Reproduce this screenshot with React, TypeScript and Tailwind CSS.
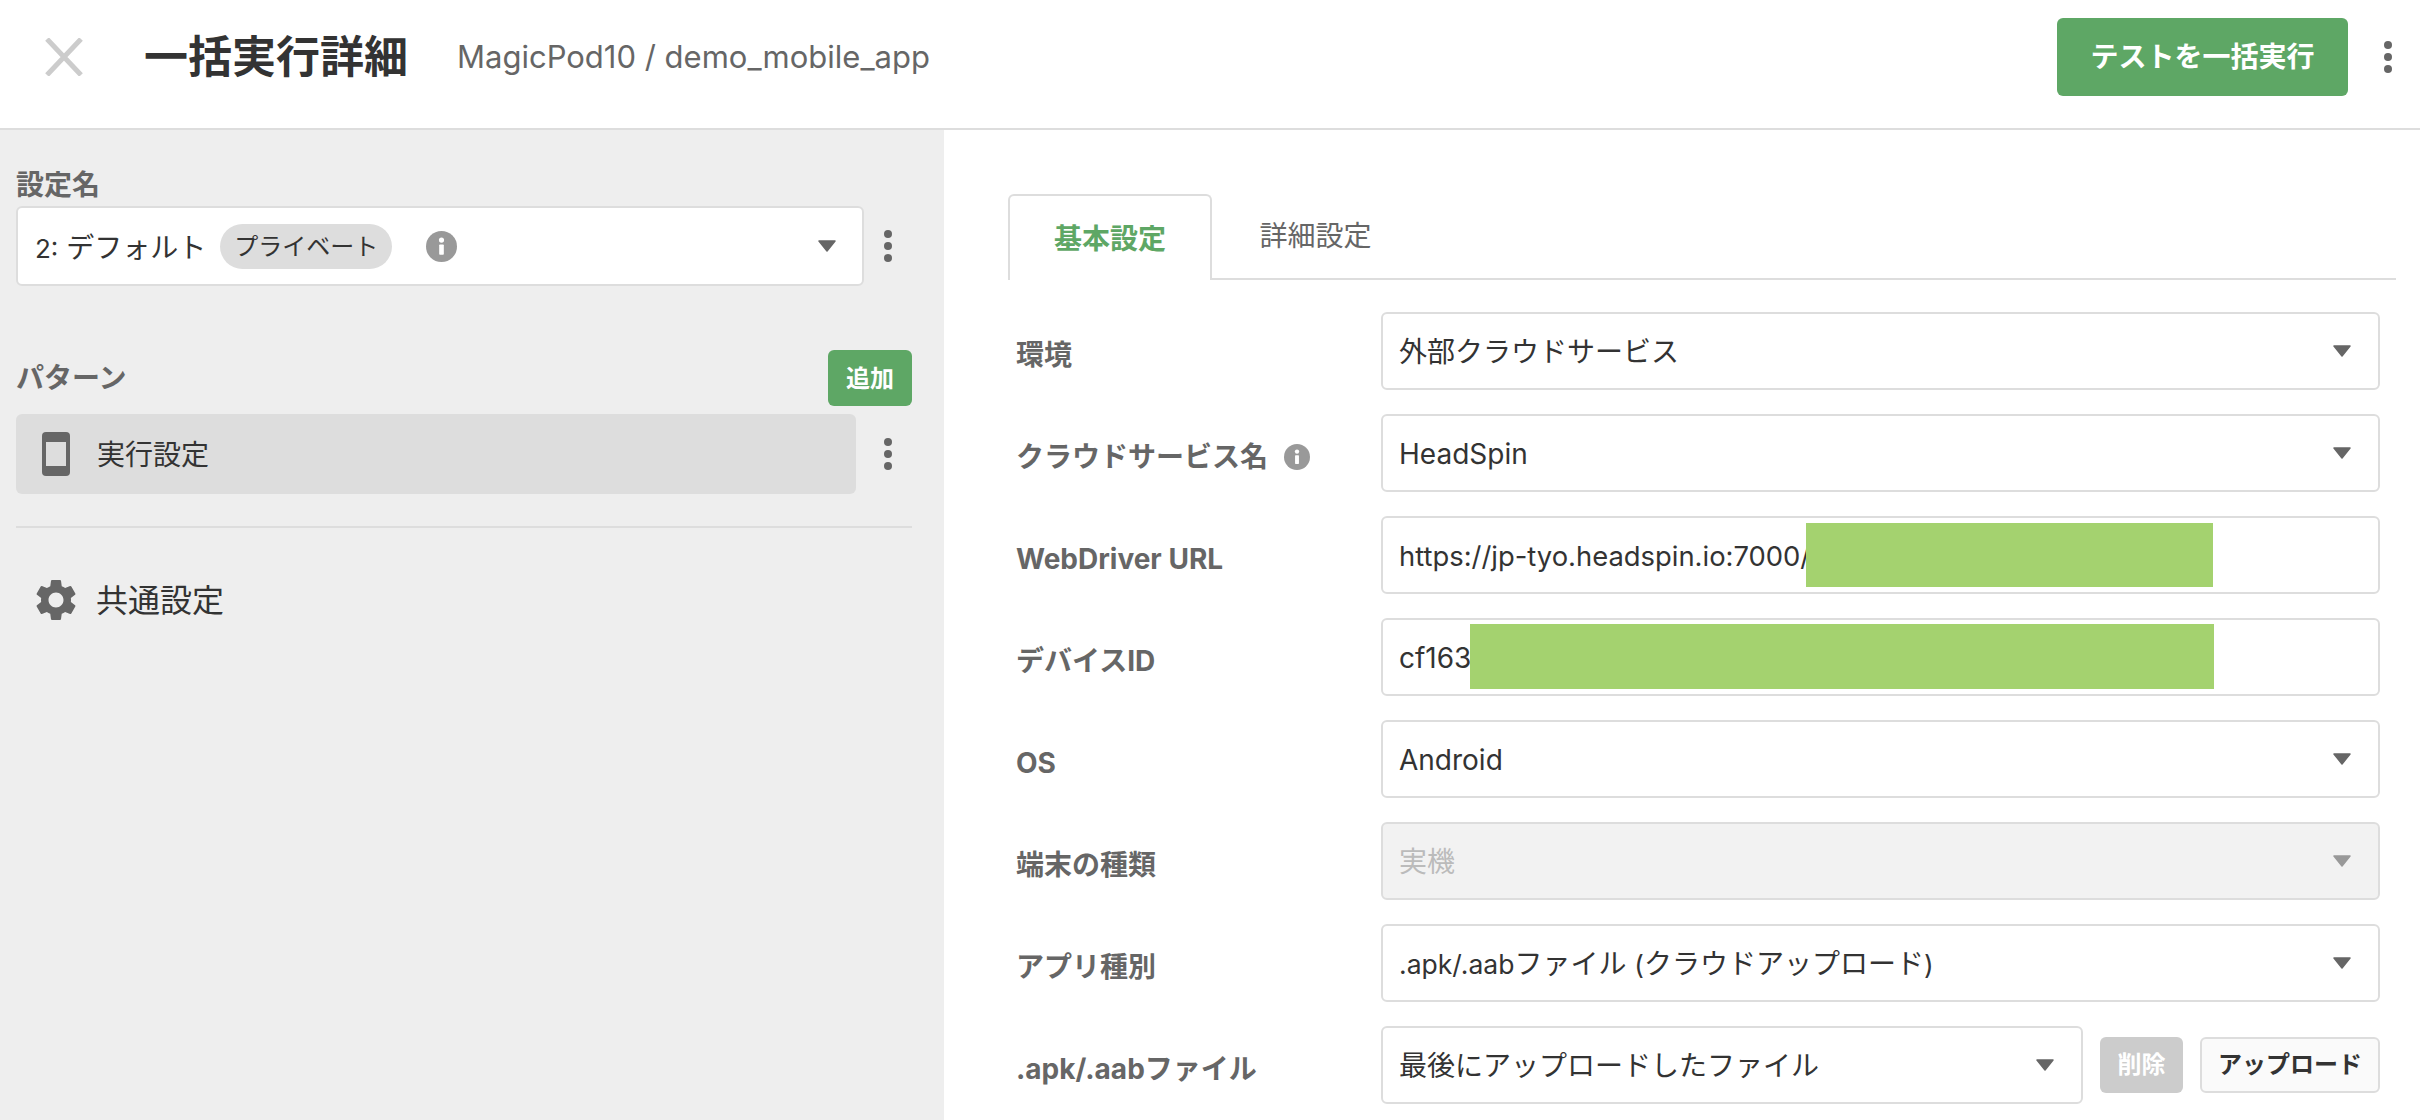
const GREEN = 'bg-[#5ea765]';

function Kebab() {
  return (
    <svg width="10" height="34" viewBox="0 0 10 34" className="shrink-0">
      <circle cx="5" cy="5" r="4" fill="#666" />
      <circle cx="5" cy="17" r="4" fill="#666" />
      <circle cx="5" cy="29" r="4" fill="#666" />
    </svg>
  );
}

function Arrow({ light = false }: { light?: boolean }) {
  return (
    <svg width="20" height="12" viewBox="0 0 20 12" className="shrink-0">
      <path d="M2 1h16l-8 10z" fill={light ? '#999' : '#666'} stroke={light ? '#999' : '#666'} strokeWidth="1.5" strokeLinejoin="round" />
    </svg>
  );
}

function Info({ size }: { size: number }) {
  return (
    <svg width={size} height={size} viewBox="0 0 24 24" className="shrink-0">
      <circle cx="12" cy="12" r="12" fill="#999" />
      <rect x="10.2" y="10.4" width="3.6" height="8" rx="0.6" fill="#fff" />
      <circle cx="12" cy="7" r="2" fill="#fff" />
    </svg>
  );
}

function Field({ children, disabled = false, arrow = true, className = '' }: { children?: React.ReactNode; disabled?: boolean; arrow?: boolean; className?: string }) {
  return (
    <div className={`relative flex h-[78px] items-center rounded-[6px] border-2 border-[#ddd] pl-[16px] pr-[26px] text-[28px] ${disabled ? 'bg-[#f2f2f2] text-[#bbb]' : 'bg-white text-[#333]'} ${className}`}>
      <span className="flex-1 whitespace-nowrap pt-[2px]">{children}</span>
      {arrow && <Arrow light={disabled} />}
    </div>
  );
}

function Row({ label, info = false, children }: { label: string; info?: boolean; children: React.ReactNode }) {
  return (
    <div className="mb-[24px] flex items-center">
      <div className="flex w-[365px] shrink-0 items-center gap-[16px] pt-[8px] text-[28px] font-bold text-[#666]">
        {label}
        {info && <Info size={26} />}
      </div>
      <div className="min-w-0 flex-1">{children}</div>
    </div>
  );
}

function Sidebar() {
  return (
    <aside className="h-full w-[944px] shrink-0 bg-[#eee] pl-[16px] pr-[32px] pt-[35px]">
      <div className="h-[41px] text-[28px] font-bold leading-[40px] text-[#666]">設定名</div>
      <div className="flex items-center">
        <div className="flex h-[80px] w-[848px] shrink-0 items-center rounded-[6px] border-2 border-[#ddd] bg-white pl-[17px] pr-[25px] text-[28px] text-[#333]">
          <span className="pt-[3px]">
            <span className="text-[26px]">2:</span> デフォルト
          </span>
          <span className="ml-[14px] flex h-[45px] w-[172px] items-center justify-center rounded-full bg-[#ddd] pt-[2px] text-[24px]">プライベート</span>
          <span className="ml-[34px] flex-1">
            <Info size={31} />
          </span>
          <Arrow />
        </div>
        <div className="flex w-[48px] justify-center">
          <Kebab />
        </div>
      </div>

      <div className="mt-[64px] flex h-[56px] items-center justify-between">
        <span className="text-[28px] font-bold text-[#666]">パターン</span>
        <button className={`h-[56px] w-[84px] rounded-[6px] ${GREEN} pt-[1px] text-[24px] font-bold text-white`}>追加</button>
      </div>
      <div className="mt-[8px] flex items-center">
        <div className="flex h-[80px] w-[840px] shrink-0 items-center rounded-[6px] bg-[#ddd] pl-[26px] text-[28px] text-[#333]">
          <svg width="28" height="44" viewBox="0 0 28 44" className="shrink-0">
            <rect width="28" height="44" rx="4" fill="#666" />
            <rect x="4" y="10" width="20" height="24" fill="#ddd" />
          </svg>
          <span className="ml-[27px] pt-[2px]">実行設定</span>
        </div>
        <div className="flex w-[56px] justify-center pl-[8px]">
          <Kebab />
        </div>
      </div>
      <div className="mt-[32px] h-[2px] bg-[#ddd]" />
      <div className="mt-[46px] flex items-center pl-[15px] text-[32px] text-[#333]">
        <svg width="50" height="50" viewBox="0 0 24 24" className="shrink-0" fill="#666">
          <path d="M19.14 12.94c.04-.3.06-.61.06-.94 0-.32-.02-.64-.07-.94l2.03-1.58c.18-.14.23-.41.12-.61l-1.92-3.32c-.12-.22-.37-.29-.59-.22l-2.39.96c-.5-.38-1.03-.7-1.62-.94l-.36-2.54c-.04-.24-.24-.41-.48-.41h-3.84c-.24 0-.43.17-.47.41l-.36 2.54c-.59.24-1.13.57-1.62.94l-2.39-.96c-.22-.08-.47 0-.59.22L2.74 8.87c-.12.21-.08.47.12.61l2.03 1.58c-.05.3-.09.63-.09.94s.02.64.07.94l-2.03 1.58c-.18.14-.23.41-.12.61l1.92 3.32c.12.22.37.29.59.22l2.39-.96c.5.38 1.03.7 1.62.94l.36 2.54c.05.24.24.41.48.41h3.84c.24 0 .44-.17.47-.41l.36-2.54c.59-.24 1.13-.56 1.62-.94l2.39.96c.22.08.47 0 .59-.22l1.92-3.32c.12-.22.07-.47-.12-.61l-2.01-1.58zM12 15.6c-1.98 0-3.6-1.62-3.6-3.6s1.62-3.6 3.6-3.6 3.6 1.62 3.6 3.6-1.62 3.6-3.6 3.6z" />
        </svg>
        <span className="ml-[15px] pt-[3px]">共通設定</span>
      </div>
    </aside>
  );
}

export default function App() {
  return (
    <div className="flex h-[1120px] w-[2420px] flex-col overflow-hidden bg-white font-[Inter,'Noto_Sans_CJK_JP',sans-serif]">
      <header className="flex h-[130px] shrink-0 items-center border-b-2 border-[#ddd] pb-[14px] pl-[45px] pr-[27px]">
        <svg width="38" height="38" viewBox="0 0 38 38" className="shrink-0">
          <path d="M2 1l34 36M36 1L2 37" stroke="#ccc" strokeWidth="5" fill="none" />
        </svg>
        <h1 className="ml-[61px] text-[44px] font-bold text-[#333]">一括実行詳細</h1>
        <span className="ml-[49px] text-[31px] text-[#666]">MagicPod10 / demo_mobile_app</span>
        <button className={`ml-auto h-[78px] w-[291px] rounded-[6px] ${GREEN} text-[28px] font-bold text-white`}>テストを一括実行</button>
        <div className="ml-[35px]">
          <Kebab />
        </div>
      </header>

      <div className="flex min-h-0 flex-1">
        <Sidebar />
        <main className="min-w-0 flex-1 pl-[64px] pr-[24px] pt-[64px]">
          <div className="flex h-[86px] items-end border-b-2 border-[#ddd]">
            <div className="-mb-[2px] flex h-[86px] w-[204px] items-center justify-center rounded-t-[6px] border-2 border-b-0 border-[#ddd] bg-white pt-[2px] text-[28px] font-bold text-[#5ea765]">
              基本設定
            </div>
            <div className="flex h-[86px] w-[204px] items-center justify-center pl-[3px] pt-[2px] text-[28px] text-[#666]">詳細設定</div>
          </div>

          <form className="mt-[32px] pl-[8px] pr-[16px]">
            <Row label="環境">
              <Field>外部クラウドサービス</Field>
            </Row>
            <Row label="クラウドサービス名" info>
              <Field>HeadSpin</Field>
            </Row>
            <Row label="WebDriver URL">
              <Field arrow={false}>
                <span className="text-[27.4px]">https://jp-tyo.headspin.io:7000/</span>
                <span className="absolute left-[423px] top-[5px] h-[64px] w-[407px] bg-[#a4d26f]" />
              </Field>
            </Row>
            <Row label="デバイスID">
              <Field arrow={false}>
                cf163
                <span className="absolute left-[87px] top-[4px] h-[65px] w-[744px] bg-[#a4d26f]" />
              </Field>
            </Row>
            <Row label="OS">
              <Field>Android</Field>
            </Row>
            <Row label="端末の種類">
              <Field disabled>実機</Field>
            </Row>
            <Row label="アプリ種別">
              <Field>
                <span className="text-[26.5px]">.apk/.aab</span>ファイル <span className="text-[26.5px]">(</span>クラウドアップロード<span className="text-[26.5px]">)</span>
              </Field>
            </Row>
            <Row label=".apk/.aabファイル">
              <div className="flex items-center">
                <Field className="w-[702px] shrink-0">最後にアップロードしたファイル</Field>
                <button type="button" className="ml-[17px] h-[56px] w-[83px] rounded-[6px] bg-[#ccc] text-[24px] font-bold text-white">削除</button>
                <button type="button" className="ml-[17px] h-[56px] w-[180px] rounded-[6px] border-2 border-[#ddd] bg-[#fafafa] text-[24px] font-bold text-[#333]">アップロード</button>
              </div>
            </Row>
          </form>
        </main>
      </div>
    </div>
  );
}
